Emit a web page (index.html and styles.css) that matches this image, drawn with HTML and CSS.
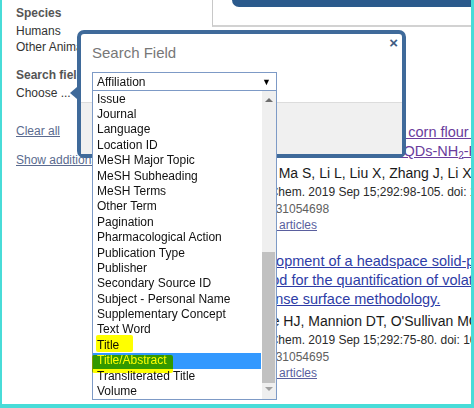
FILE: index.html
```html
<!DOCTYPE html>
<html lang="en">
<head>
  <meta charset="UTF-8" />
  <title>Search Field</title>
  <link rel="stylesheet" href="styles.css">
</head>
<body>
  <div class="screen">
    <div class="page">
      <!-- Filters sidebar -->
      <aside class="filters">
        <h4 class="filter-title">Species</h4>
        <div class="filter-item">Humans</div>
        <div class="filter-item">Other Animals</div>

        <h4 class="filter-title spaced">Search fields</h4>
        <div class="filter-item">Choose ...</div>

        <a class="filter-link clear">Clear all</a>
        <a class="filter-link more">Show additional filters</a>
      </aside>

      <!-- Results -->
      <main class="results">
        <div class="toolbar"><div class="toolbar-bar"></div></div>

        <div class="result-list">
          <div class="result">
            <a class="result-title visited">Analysis of aflatoxin B1 in corn flour using a fluorescent probe<br>a sensor, based on CdTe QDs-NH<sub>2</sub>-RGO composites</a>
            <div class="result-authors">Wu Y, Ma S, Li L, Liu X, Zhang J, Li X.</div>
            <div class="result-source">Food Chem. 2019 Sep 15;292:98-105. doi: 10.1016/j.foodchem.2019.04.047.</div>
            <div class="result-pmid">PMID: 31054698</div>
            <a class="result-similar">Similar articles</a>
          </div>

          <div class="result">
            <a class="result-title">Development of a headspace solid-phase microextraction gas chromatography-mass spectrometry<br>method for the quantification of volatiles associated with lipid oxidation in whole milk powder using<br>response surface methodology.</a>
            <div class="result-authors">Clarke HJ, Mannion DT, O'Sullivan MG, Kerry JP, Kilcawley KN.</div>
            <div class="result-source">Food Chem. 2019 Sep 15;292:75-80. doi: 10.1016/j.foodchem.2019.04.026.</div>
            <div class="result-pmid">PMID: 31054695</div>
            <a class="result-similar">Similar articles</a>
          </div>
        </div>
      </main>
    </div>

    <!-- Search field dialog -->
    <div class="dialog">
      <span class="dialog-arrow"></span>
      <span class="dialog-close">&times;</span>
      <h3 class="dialog-title">Search Field</h3>

      <div class="field">
        <div class="field-select">
          <span>Affiliation</span>
          <span class="field-caret">&#9660;</span>
        </div>

        <div class="field-list">
          <div class="field-option">Issue</div>
          <div class="field-option">Journal</div>
          <div class="field-option">Language</div>
          <div class="field-option">Location ID</div>
          <div class="field-option">MeSH Major Topic</div>
          <div class="field-option">MeSH Subheading</div>
          <div class="field-option">MeSH Terms</div>
          <div class="field-option">Other Term</div>
          <div class="field-option">Pagination</div>
          <div class="field-option">Pharmacological Action</div>
          <div class="field-option">Publication Type</div>
          <div class="field-option">Publisher</div>
          <div class="field-option">Secondary Source ID</div>
          <div class="field-option">Subject - Personal Name</div>
          <div class="field-option">Supplementary Concept</div>
          <div class="field-option">Text Word</div>
          <div class="field-option">Title</div>
          <div class="field-option selected">Title/Abstract</div>
          <div class="field-option">Transliterated Title</div>
          <div class="field-option">Volume</div>

          <div class="scrollbar">
            <span class="scroll-up"></span>
            <span class="scroll-thumb"></span>
            <span class="scroll-down"></span>
          </div>

          <!-- highlighter marks -->
          <span class="marker marker-title"></span>
          <span class="marker marker-abstract"></span>
        </div>
      </div>

      <div class="dialog-footer"></div>
    </div>
  </div>
</body>
</html>
```

FILE: styles.css
```css
body {
  margin: 0;
  padding: 0;
  font-family: "Liberation Sans", Arial, sans-serif;
  background: #fff;
}
.screen {
  position: relative;
  box-sizing: border-box;
  width: 474px;
  height: 408px;
  overflow: hidden;
  border-left: 2px solid #48dcd8;
  border-right: 3px solid #48dcd8;
  border-bottom: 4px solid #48dcd8;
}
.page {
  display: flex;
  height: 100%;
}

/* sidebar */
.filters {
  flex: 0 0 210px;
  padding: 5px 0 0 14px;
  box-sizing: border-box;
  font-size: 12px;
  color: #333;
}
.filter-title {
  margin: 0 0 2px;
  font-size: 12px;
  line-height: 16px;
  font-weight: bold;
  color: #555;
}
.filter-title.spaced {
  margin-top: 12px;
}
.filter-item {
  line-height: 16px;
  white-space: nowrap;
}
.filter-link {
  display: block;
  line-height: 16px;
  color: #5b6b8f;
  text-decoration: underline;
  white-space: nowrap;
}
.filter-link.clear {
  margin-top: 22px;
}
.filter-link.more {
  margin-top: 13px;
}

/* results */
.results {
  flex: 1;
  min-width: 0;
  overflow: hidden;
}
.toolbar {
  height: 25px;
  border-left: 1px solid #c8c8c8;
  border-bottom: 2px solid #d2d2d2;
  padding-left: 19px;
}
.toolbar-bar {
  height: 7px;
  background-color: #2b5a8c;
  border-bottom-left-radius: 9px;
}
.result-list {
  margin-top: 96px;
  padding-left: 27px;
  white-space: nowrap;
}
.result {
  margin-bottom: 19px;
}
.result-title {
  display: block;
  font-size: 14.5px;
  line-height: 19px;
  color: #2e3ca6;
  text-decoration: underline;
}
.result-title.visited {
  color: #6a3c9c;
}
.result-title sub {
  font-size: 10px;
  line-height: 0;
  vertical-align: -3px;
}
.result-authors {
  margin-top: 2px;
  font-size: 14px;
  line-height: 20px;
  color: #1a1a1a;
}
.result-source {
  font-size: 12px;
  line-height: 18px;
  color: #2a2a2a;
}
.result-pmid {
  font-size: 12px;
  line-height: 17px;
  color: #606060;
}
.result-similar {
  display: block;
  font-size: 12px;
  line-height: 15px;
  color: #5a5f9e;
  text-decoration: underline;
}

/* dialog */
.dialog {
  position: absolute;
  left: 75px;
  top: 30px;
  width: 329px;
  height: 128px;
  box-sizing: border-box;
  border: 4px solid #3f6a9a;
  border-radius: 7px;
  background: #fff;
  display: flex;
  flex-direction: column;
  padding: 10px 0 0 11px;
}
.dialog-arrow {
  position: absolute;
  left: -11px;
  top: 53px;
  width: 0;
  height: 0;
  border-top: 6px solid transparent;
  border-bottom: 6px solid transparent;
  border-right: 7px solid #3f6a9a;
}
.dialog-close {
  position: absolute;
  top: 1px;
  right: 4px;
  font-size: 15px;
  line-height: 16px;
  font-weight: bold;
  color: #3e5c82;
}
.dialog-title {
  margin: 0 0 10px;
  font-size: 15px;
  line-height: 18px;
  font-weight: normal;
  color: #777;
}
.field {
  position: relative;
  width: 185px;
  z-index: 2;
}
.field-select {
  height: 19px;
  box-sizing: border-box;
  border: 1px solid #7d9ac6;
  display: flex;
  align-items: center;
  justify-content: space-between;
  padding: 0 5px 0 4px;
  font-size: 12px;
  color: #111;
  background: #fff;
}
.field-caret {
  font-size: 9px;
  color: #000;
}
.field-list {
  position: absolute;
  top: 100%;
  left: 0;
  width: 185px;
  box-sizing: border-box;
  border: 1px solid #7d9ac6;
  border-top: none;
  padding-top: 0.6px;
  background: #fff;
}
.field-option {
  height: 15.4px;
  line-height: 15.4px;
  font-size: 12px;
  color: #111;
  padding-left: 4px;
  margin-right: 15px;
  white-space: nowrap;
}
.field-option.selected {
  background-color: #3399ff;
  color: #fff;
}
.scrollbar {
  position: absolute;
  top: 0;
  right: 0;
  bottom: 0;
  width: 14px;
  background: #efefef;
}
.scroll-up,
.scroll-down {
  position: absolute;
  left: 3px;
  width: 0;
  height: 0;
  border-left: 4px solid transparent;
  border-right: 4px solid transparent;
}
.scroll-up {
  top: 7px;
  border-bottom: 4px solid #6f6f6f;
}
.scroll-down {
  bottom: 8px;
  border-top: 4px solid #a0a0a0;
}
.scroll-thumb {
  position: absolute;
  left: 0;
  right: 1px;
  top: 161px;
  height: 131px;
  background: #c1c1c1;
}
.marker {
  position: absolute;
  background: #ffff00;
  mix-blend-mode: multiply;
  border-radius: 2px;
}
.marker-title {
  left: 3px;
  top: 244px;
  width: 37px;
  height: 17px;
}
.marker-abstract {
  left: -1px;
  top: 264px;
  width: 81px;
  height: 18px;
}
.dialog-footer {
  margin: auto 0 0 -11px;
  height: 51px;
  background: #f0f0f0;
  border-top: 1px solid #dcdcdc;
}
```
